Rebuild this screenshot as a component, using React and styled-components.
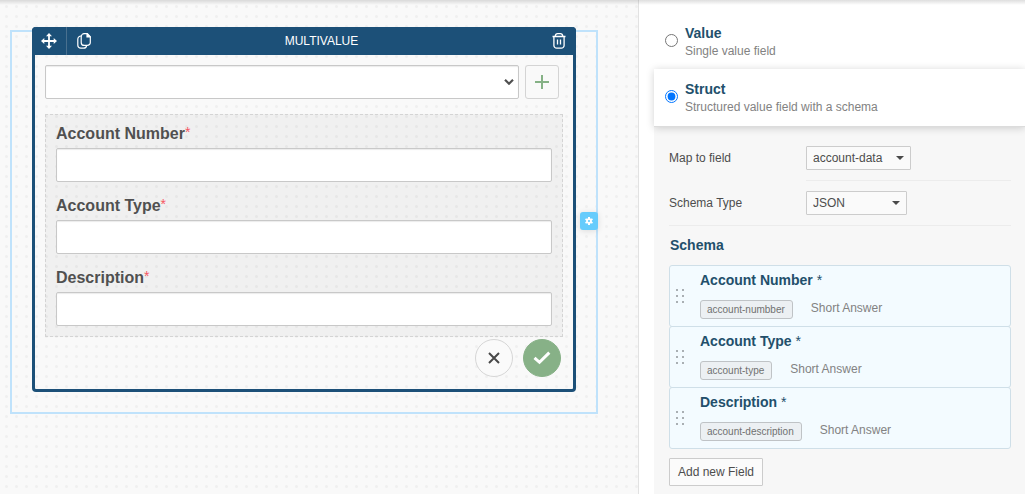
import React, { useState } from 'react';
import styled, { createGlobalStyle } from 'styled-components';

const GlobalStyle = createGlobalStyle`
  * {
    box-sizing: border-box;
  }

  body {
    margin: 0;
    font-family: 'Liberation Sans', Arial, sans-serif;
    font-size: 12px;
    color: #4d4d4d;
    background: #fff;
  }

  button,
  input,
  select {
    font: inherit;
    color: inherit;
  }

  button {
    cursor: pointer;
  }
`;

const Page = styled.div`
  position: relative;
  display: flex;
  min-height: 100vh;

  &::before {
    content: '';
    position: absolute;
    top: 0;
    left: 0;
    right: 0;
    height: 5px;
    background: linear-gradient(rgba(0, 0, 0, 0.13), rgba(0, 0, 0, 0));
    pointer-events: none;
  }
`;

const Canvas = styled.main`
  flex: 1;
  min-width: 0;
  padding: 30px 40px 30px 10px;
  background-color: #f9f9f9;
  background-image: radial-gradient(circle at 6.5px 6.5px, #f0f0f0 1px, rgba(240, 240, 240, 0) 2px);
  background-size: 10px 10px;
`;

const Selection = styled.div`
  position: relative;
  padding: 0 20px 20px;
  border: 2px solid #bfe2fb;
`;

const Card = styled.section`
  margin-top: -5px;
  border: solid #1c5078;
  border-width: 0 3px 3px;
  border-radius: 4px;
`;

const CardHeader = styled.header`
  display: flex;
  align-items: center;
  height: 28px;
  margin: 0 -3px;
  border-radius: 4px 4px 0 0;
  background: #1c5078;
  color: #fff;
`;

const CardTitle = styled.h1`
  flex: 1;
  margin: 0;
  font-size: 12px;
  font-weight: normal;
  text-align: center;
`;

const HeaderButton = styled.button`
  display: flex;
  align-items: center;
  justify-content: center;
  width: 34px;
  height: 28px;
  padding: 0;
  border: 0;
  background: none;
  color: #fff;
`;

const MoveButton = styled(HeaderButton)`
  width: 35px;
  border-right: 1px solid #49708f;
`;

const CardBody = styled.div`
  padding: 10px 10px 12px;
`;

const PickerRow = styled.div`
  display: flex;
  gap: 6px;
  margin: 0 4px 15px 0;
`;

const SelectWrap = styled.div`
  position: relative;
  flex: ${({ $grow }) => ($grow ? 1 : 'none')};
  display: flex;

  svg {
    position: absolute;
    top: 50%;
    right: ${({ $grow }) => ($grow ? 5 : 7)}px;
    transform: translateY(-50%);
    pointer-events: none;
  }
`;

const ValueSelect = styled.select`
  appearance: none;
  width: 100%;
  height: 34px;
  padding: 0 20px 0 8px;
  border: 1px solid #c8c8c8;
  border-radius: 2px;
  background: #fff;
  box-shadow: inset 0 1px 1px rgba(0, 0, 0, 0.08);
`;

const PlusButton = styled.button`
  display: flex;
  align-items: center;
  justify-content: center;
  width: 34px;
  height: 34px;
  padding: 0;
  border: 1px solid #d4d4d4;
  border-radius: 3px;
  background: #f9f9f9;
  color: #85b185;
`;

const FieldGroup = styled.div`
  display: grid;
  gap: 15px;
  padding: 10px;
  border: 1px dashed #d4d4d4;
  background: rgba(0, 0, 0, 0.035);
`;

const FieldLabel = styled.label`
  display: block;
  margin-bottom: 5px;
  font-size: 16px;
  font-weight: bold;
  line-height: 18px;
  color: #505050;

  sup {
    font-size: 14px;
    font-weight: normal;
    line-height: 0;
    vertical-align: 2px;
    color: #f55763;
  }
`;

const TextInput = styled.input`
  display: block;
  width: 100%;
  height: 34px;
  padding: 0 8px;
  border: 1px solid #c8c8c8;
  border-radius: 2px;
  background: #fff;
  box-shadow: inset 0 1px 1px rgba(0, 0, 0, 0.08);
`;

const Actions = styled.div`
  display: flex;
  justify-content: flex-end;
  gap: 10px;
  margin: 2px 2px 0 0;
`;

const RoundButton = styled.button`
  display: flex;
  align-items: center;
  justify-content: center;
  width: 38px;
  height: 38px;
  padding: 0;
  border: 1px solid ${({ $confirm }) => ($confirm ? '#87b187' : '#d6d6d6')};
  border-radius: 50%;
  background: ${({ $confirm }) => ($confirm ? '#87b187' : '#fafafa')};
  color: ${({ $confirm }) => ($confirm ? '#fff' : '#484848')};
`;

const GearButton = styled.button`
  position: absolute;
  top: calc(50% - 10px);
  right: -2px;
  display: flex;
  align-items: center;
  justify-content: center;
  width: 18px;
  height: 18px;
  padding: 0;
  border: 0;
  border-radius: 3px;
  background: #66ccfc;
  box-shadow: 0 1px 6px rgba(0, 0, 0, 0.12);
  color: #fff;
`;

const Sidebar = styled.aside`
  display: flex;
  flex-direction: column;
  width: 387px;
  padding: 13px 0 0 15px;
  border-left: 1px solid #e2e2e2;
`;

const Option = styled.label`
  position: relative;
  display: flex;
  gap: 7px;
  padding: 11px 11px 9px;
  line-height: 18px;
  color: #828282;
  ${({ $active }) =>
    $active &&
    `
    padding-bottom: 10px;
    border-bottom: 1px solid #dcdcdc;
    background: #fff;
    box-shadow: 0 1px 8px rgba(0, 0, 0, 0.18);
  `}

  input {
    width: 13px;
    height: 13px;
    margin: 10px 0 0;
  }

  strong {
    display: block;
    font-size: 14px;
    color: #224f6b;
  }
`;

const Settings = styled.div`
  flex: 1;
  padding: 9px 14px 8px 15px;
  background: #f7f7f7;
`;

const SettingRow = styled.div`
  display: grid;
  grid-template-columns: 137px 1fr;
  line-height: 44px;
  border-bottom: ${({ $divided }) => ($divided ? '1px solid #ececec' : '0')};
`;

const SettingValue = styled.div`
  padding: 10px 0;
  border-bottom: ${({ $divided }) => ($divided ? '1px solid #ececec' : '0')};
`;

const SmallSelect = styled.select`
  appearance: none;
  width: ${({ $width }) => $width}px;
  height: 24px;
  padding: 0 20px 0 6px;
  border: 1px solid #ccc;
  border-radius: 1px;
  background: #fafafa;
  line-height: normal;
`;

const SchemaTitle = styled.h2`
  margin: 10px 1px 11px;
  font-size: 14px;
  line-height: 18px;
  color: #224f6b;
`;

const SchemaList = styled.ul`
  margin: 0 0 9px;
  padding: 0;
  list-style: none;
`;

const SchemaItem = styled.li`
  display: flex;
  align-items: center;
  gap: 15px;
  height: 62px;
  padding: 0 6px;
  border: 1px solid #cfdfe8;
  border-radius: 3px;
  background: #f3fbff;

  & + & {
    margin-top: -1px;
  }
`;

const ItemName = styled.div`
  margin-bottom: 11px;
  font-size: 14px;
  font-weight: bold;
  line-height: 18px;
  color: #224f6b;

  span {
    font-weight: normal;
  }
`;

const ItemMeta = styled.div`
  display: flex;
  gap: 18px;
  margin-bottom: 2px;
  line-height: 16px;
  color: #828282;
`;

const Chip = styled.code`
  padding: 0 7px 0 6px;
  border: 1px solid #bfc3c6;
  border-radius: 3px;
  background: #ecf0f3;
  font-family: inherit;
  font-size: 10px;
  line-height: 17px;
  color: #707070;
`;

const AddButton = styled.button`
  height: 28px;
  padding: 0 8px;
  border: 1px solid #ccc;
  border-radius: 1px;
  background: #fbfbfb;
`;

const MoveIcon = () => (
  <svg width="16" height="16" viewBox="0 0 16 16" fill="currentColor">
    <path d="M8 0l3 3.3H8.9v3.8h3.8V5L16 8l-3.3 3V8.9H8.9v3.8H11L8 16l-3-3.3h2.1V8.9H3.3V11L0 8l3.3-3v2.1h3.8V3.3H5z" />
  </svg>
);

const CopyIcon = () => (
  <svg width="14" height="16" viewBox="0 0 14 16" fill="none" stroke="currentColor" strokeWidth="1.2">
    <path d="M7.2.7h3.200l2.900 3v5.700a3 3 0 0 1-3 3H7.200a3 3 0 0 1-3-3V3.700a3 3 0 0 1 3-3z" />
    <path d="M4.200 3A3.200 3.200 0 0 0 .8 6.200v6a3 3 0 0 0 3 3h2.800a3 3 0 0 0 3-2.800" />
    <path d="M10 .8v3.200h3.200z" fill="currentColor" />
  </svg>
);

const TrashIcon = () => (
  <svg width="14" height="16" viewBox="0 0 14 16" fill="none" stroke="currentColor" strokeWidth="1.3">
    <path d="M.5 3.500h13M3.200 3.200C3.400 1.500 4.200.7 5.600.7h2.800c1.400 0 2.200.8 2.400 2.500" />
    <path d="M1.900 3.500v8.900a2.800 2.800 0 0 0 2.800 2.800h4.600a2.800 2.800 0 0 0 2.800-2.800V3.500" />
    <path d="M5.500 6.500v5M8.500 6.500v5" />
  </svg>
);

const ChevronIcon = () => (
  <svg width="10" height="7" viewBox="0 0 10 7" fill="none" stroke="#505050" strokeWidth="2.200">
    <path d="M1 1.300l4 3.900 4-3.900" />
  </svg>
);

const CaretIcon = () => (
  <svg width="8" height="4" viewBox="0 0 8 4" fill="#4a4a4a">
    <path d="M0 0h8L4 4z" />
  </svg>
);

const PlusIcon = () => (
  <svg width="14" height="14" viewBox="0 0 14 14" fill="none" stroke="currentColor" strokeWidth="2">
    <path d="M7 0v14M0 7h14" />
  </svg>
);

const CloseIcon = () => (
  <svg width="12" height="12" viewBox="0 0 12 12" fill="none" stroke="currentColor" strokeWidth="2">
    <path d="M1 1l10 10M11 1L1 11" />
  </svg>
);

const CheckIcon = () => (
  <svg width="18" height="14" viewBox="0 0 18 14" fill="none" stroke="currentColor" strokeWidth="3">
    <path d="M1.500 6.800L6.500 11.300 16.300 1.600" />
  </svg>
);

const GearIcon = () => (
  <svg width="8" height="8" viewBox="0 0 8 8">
    <path d="M4 0v8M.5 2l7 4M7.500 2l-7 4" stroke="currentColor" strokeWidth="2" />
    <circle cx="4" cy="4" r="2" fill="#66ccfc" stroke="currentColor" strokeWidth="1.800" />
  </svg>
);

const GripIcon = () => (
  <svg width="9" height="14" viewBox="0 0 9 14" fill="#a9afb3">
    <path d="M0 0h2v2H0zM6 0h2v2H6zM0 6h2v2H0zM6 6h2v2H6zM0 12h2v2H0zM6 12h2v2H6z" />
  </svg>
);

const fields = [
  { name: 'Account Number', id: 'account-numbber' },
  { name: 'Account Type', id: 'account-type' },
  { name: 'Description', id: 'account-description' },
];

const options = [
  { value: 'value', title: 'Value', text: 'Single value field' },
  { value: 'struct', title: 'Struct', text: 'Structured value field with a schema' },
];

const SmallSelectWrap = styled(SelectWrap)`
  width: fit-content;
`;

const SmallSelectField = ({ id, width, value }) => (
  <SmallSelectWrap>
    <SmallSelect id={id} $width={width} defaultValue={value}>
      <option>{value}</option>
    </SmallSelect>
    <CaretIcon />
  </SmallSelectWrap>
);

const MultivalueCard = () => (
  <Selection>
    <Card>
      <CardHeader>
        <MoveButton aria-label="Move"><MoveIcon /></MoveButton>
        <HeaderButton aria-label="Duplicate"><CopyIcon /></HeaderButton>
        <CardTitle>MULTIVALUE</CardTitle>
        <HeaderButton aria-label="Delete"><TrashIcon /></HeaderButton>
      </CardHeader>
      <CardBody>
        <PickerRow>
          <SelectWrap $grow>
            <ValueSelect aria-label="Entry">
              <option value="" />
            </ValueSelect>
            <ChevronIcon />
          </SelectWrap>
          <PlusButton aria-label="Add entry"><PlusIcon /></PlusButton>
        </PickerRow>
        <FieldGroup>
          {fields.map(({ name, id }) => (
            <div key={id}>
              <FieldLabel htmlFor={id}>
                {name}
                <sup>*</sup>
              </FieldLabel>
              <TextInput id={id} type="text" />
            </div>
          ))}
        </FieldGroup>
        <Actions>
          <RoundButton aria-label="Cancel"><CloseIcon /></RoundButton>
          <RoundButton $confirm aria-label="Confirm"><CheckIcon /></RoundButton>
        </Actions>
      </CardBody>
    </Card>
    <GearButton aria-label="Settings"><GearIcon /></GearButton>
  </Selection>
);

const App = () => {
  const [type, setType] = useState('struct');

  return (
    <Page>
      <GlobalStyle />
      <Canvas>
        <MultivalueCard />
      </Canvas>
      <Sidebar>
        {options.map(({ value, title, text }) => (
          <Option key={value} $active={type === value}>
            <input
              type="radio"
              name="type"
              value={value}
              checked={type === value}
              onChange={() => setType(value)}
            />
            <span>
              <strong>{title}</strong>
              {text}
            </span>
          </Option>
        ))}
        <Settings>
          <SettingRow>
            <label htmlFor="map-to-field">Map to field</label>
            <SettingValue $divided>
              <SmallSelectField id="map-to-field" width={105} value="account-data" />
            </SettingValue>
          </SettingRow>
          <SettingRow $divided>
            <label htmlFor="schema-type">Schema Type</label>
            <SettingValue>
              <SmallSelectField id="schema-type" width={101} value="JSON" />
            </SettingValue>
          </SettingRow>
          <SchemaTitle>Schema</SchemaTitle>
          <SchemaList>
            {fields.map(({ name, id }) => (
              <SchemaItem key={id}>
                <GripIcon />
                <div>
                  <ItemName>
                    {name} <span>*</span>
                  </ItemName>
                  <ItemMeta>
                    <Chip>{id}</Chip>
                    Short Answer
                  </ItemMeta>
                </div>
              </SchemaItem>
            ))}
          </SchemaList>
          <AddButton>Add new Field</AddButton>
        </Settings>
      </Sidebar>
    </Page>
  );
};

export default App;
